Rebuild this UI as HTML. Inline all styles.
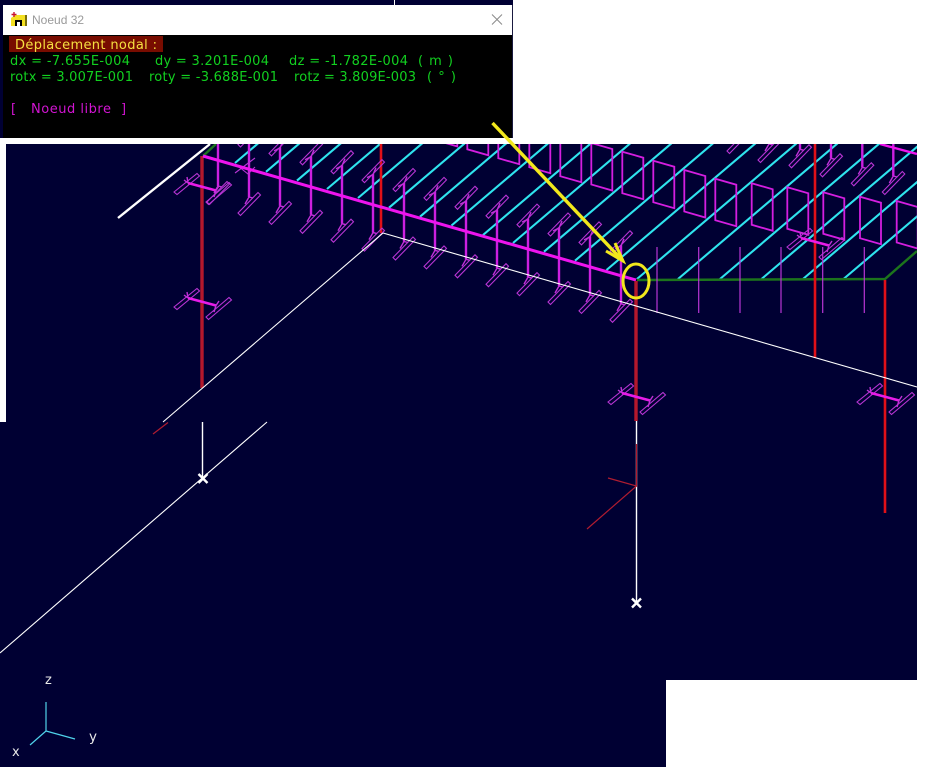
<!DOCTYPE html>
<html>
<head>
<meta charset="utf-8">
<title>Noeud 32</title>
<style>
html,body{margin:0;padding:0;background:#fff;width:926px;height:780px;overflow:hidden}
svg{display:block}
text{font-family:"DejaVu Sans","Liberation Sans",sans-serif}
</style>
</head>
<body>
<svg width="926" height="780" viewBox="0 0 926 780" xmlns="http://www.w3.org/2000/svg">
<defs>
  <clipPath id="top"><rect x="6" y="144" width="911" height="300"/></clipPath>
  <g id="ib">
    <path d="M0,-6V-64.5" stroke="#cc20e0" stroke-width="2.4" fill="none"/>
    <path d="M-11,10L9,-10.5L11.5,-8L-8.5,12.5ZM-11,-58.5L9,-79L11.5,-76.5L-8.5,-56Z" stroke="#b835d4" stroke-width="1.1" fill="none"/>
    <path d="M0,-6L-4,1M0,-6L4,-5M0,-64L-6,-61M0,-64L3,-71" stroke="#c030d8" stroke-width="1.4" fill="none"/>
  </g>
  <g id="is">
    <path d="M-28,5L-5,-13.5L-2.5,-11L-25,7.5ZM4,15L27,-4.5L29.5,-2L6.5,17.5Z" stroke="#b835d4" stroke-width="1.1" fill="none"/>
    <path d="M-14,-4L14,3.5" stroke="#e81ce8" stroke-width="2.6" fill="none"/>
    <path d="M-14,-4L-18,-7M-14,-4L-15,-10M14,3.5L17,-1M14,3.5L12,10" stroke="#c030d8" stroke-width="1.4" fill="none"/>
  </g>
  <path id="bx" d="M0,0L21,6V47.5L0,41.5Z" stroke="#d41ee0" stroke-width="1.8" fill="none"/>
  <path id="cy" d="M0,0L240,-204" stroke="#2fe4ee" stroke-width="2.1" fill="none"/>
</defs>

<!-- page backgrounds -->
<rect width="926" height="780" fill="#fff"/>
<rect x="0" y="0" width="513" height="138" fill="#000033"/>
<rect x="394" y="0" width="1" height="5" fill="#fff"/>
<rect x="6" y="144" width="911" height="536" fill="#000033"/>
<rect x="0" y="422" width="666" height="345" fill="#000033"/>

<g clip-path="url(#top)">
  <!-- cyan bars -->
  <use href="#cy" x="235" y="163"/><use href="#cy" x="266" y="171.8"/><use href="#cy" x="297" y="180.6"/>
  <use href="#cy" x="327" y="189"/><use href="#cy" x="358" y="198"/><use href="#cy" x="389" y="207.7"/>
  <use href="#cy" x="420" y="216.7"/><use href="#cy" x="451.5" y="225.5"/><use href="#cy" x="483" y="235"/>
  <use href="#cy" x="513" y="243"/><use href="#cy" x="544" y="251.7"/><use href="#cy" x="575" y="260.7"/>
  <use href="#cy" x="606.5" y="270"/><use href="#cy" x="637" y="279"/><use href="#cy" x="678" y="279"/>
  <use href="#cy" x="720" y="279"/><use href="#cy" x="761.5" y="279"/><use href="#cy" x="803" y="279"/>
  <use href="#cy" x="843.5" y="279"/>

  <!-- box sections -->
  <use href="#bx" x="436.3" y="98.9"/><use href="#bx" x="467.3" y="107.8"/><use href="#bx" x="498.3" y="116.7"/>
  <use href="#bx" x="529.3" y="125.7"/><use href="#bx" x="560.3" y="134.7"/><use href="#bx" x="591.3" y="143"/>
  <use href="#bx" x="622.3" y="151.7"/><use href="#bx" x="653.3" y="160.7"/><use href="#bx" x="684.3" y="170"/>
  <use href="#bx" x="715.3" y="178.7"/><use href="#bx" x="751.7" y="183.3"/><use href="#bx" x="787.3" y="187.3"/>
  <use href="#bx" x="823.3" y="192.3"/><use href="#bx" x="860" y="196.7"/><use href="#bx" x="896.7" y="201"/>

  <!-- green -->
  <path d="M203,156L216,144M637,280L885,279L917,251" stroke="#1c741c" stroke-width="2.4" fill="none"/>

  <!-- columns -->
  <path d="M202,156V388" stroke="#b4182c" stroke-width="3.4" fill="none"/>
  <path d="M381,144V233" stroke="#e01018" stroke-width="2.6" fill="none"/>
  <path d="M815,144V358" stroke="#e01018" stroke-width="2.6" fill="none"/>

  <!-- thin purlins -->
  <path d="M657,247V313M698.7,247V313M740,247V313M781,247V313M822.7,247V313M864.3,247V313" stroke="#b835d4" stroke-width="1.2" fill="none"/>

  <!-- I sections along beam -->
  <use href="#ib" x="218" y="192"/>
  <use href="#ib" x="249" y="203"/><use href="#ib" x="280" y="211.9"/><use href="#ib" x="311" y="220.8"/>
  <use href="#ib" x="342" y="229.7"/><use href="#ib" x="373" y="238.6"/><use href="#ib" x="404" y="247.5"/>
  <use href="#ib" x="435" y="256.4"/><use href="#ib" x="466" y="265.3"/><use href="#ib" x="497" y="274.2"/>
  <use href="#ib" x="528" y="283.1"/><use href="#ib" x="559" y="292"/><use href="#ib" x="590" y="300.9"/>
  <use href="#ib" x="621" y="309.8"/>
  <use href="#ib" x="738" y="141"/><use href="#ib" x="769" y="150"/><use href="#ib" x="800" y="155.3"/>
  <use href="#ib" x="831" y="164.3"/><use href="#ib" x="862.3" y="173.3"/><use href="#ib" x="893.3" y="182"/>
  <path d="M235,173L255,158M238,166L248,174L255,167" stroke="#b835d4" stroke-width="1.1" fill="none"/>

  <!-- main beam -->
  <path d="M203,156L636,280" stroke="#ee14ee" stroke-width="3" fill="none"/>
  <path d="M880,144L917,154" stroke="#ee14ee" stroke-width="2.4" fill="none"/>

  <!-- sections on columns -->
  <use href="#is" x="202" y="187"/>
  <use href="#is" x="815" y="242"/>
</g>

<!-- column running past the clipped area -->
<path d="M885,280V513" stroke="#e01018" stroke-width="2.6" fill="none"/>
<path d="M636,281V421" stroke="#b4182c" stroke-width="3.4" fill="none"/>

<!-- sections below -->
<use href="#is" x="202" y="302"/>
<use href="#is" x="636" y="397"/>
<use href="#is" x="885" y="397"/>

<!-- white lines -->
<path d="M118,218L210,144" stroke="#fff" stroke-width="2.4" fill="none"/>
<path d="M383,233L917,387M383,233L163,422M267,422L0,653" stroke="#fff" stroke-width="1.1" fill="none"/>
<path d="M202.5,422V478M636.5,421V602" stroke="#fff" stroke-width="1.4" fill="none"/>
<path d="M198.5,474L207.5,483M207.5,474L198.5,483M632,598.5L641,607.5M641,598.5L632,607.5" stroke="#fff" stroke-width="2.4" fill="none"/>

<!-- dark red local frames -->
<path d="M636.5,444V486L608,478M636.5,486L587,529M153,434L168,422.5" stroke="#b01c30" stroke-width="1.2" fill="none"/>

<!-- axes -->
<path d="M46,702V731L75,739M46,731L30,745" stroke="#4fd2ea" stroke-width="1.2" fill="none"/>
<text x="45" y="684" font-size="13" fill="#e8e8e8">z</text>
<text x="89" y="741" font-size="13.5" fill="#e8e8e8">y</text>
<text x="12" y="756" font-size="13" fill="#e8e8e8">x</text>

<!-- window -->
<rect x="3" y="5" width="509" height="133" fill="#000"/>
<rect x="3" y="5" width="509" height="30" fill="#fff"/>
<rect x="512" y="5" width="1" height="133" fill="#1a1a40"/>
<rect x="0" y="138" width="513" height="6" fill="#fff"/>
<rect x="0" y="144" width="6" height="278" fill="#fff"/>

<!-- title icon -->
<path d="M11,18L15,15H27V26H22V20H15V26H11Z" fill="#f4e020"/>
<path d="M15,20H22V26H20V22H17V26H15Z" fill="#000"/>
<path d="M26,15V26" stroke="#000" stroke-width="1"/>
<path d="M14,12V17M11.5,14.5H16.5" stroke="#c81430" stroke-width="1.4"/>
<text x="32" y="24" font-size="12" fill="#9a9a9a" style="font-family:'Liberation Sans',sans-serif">Noeud 32</text>
<path d="M492,14.5L502,24.5M502,14.5L492,24.5" stroke="#8a8a8a" stroke-width="1" fill="none"/>

<!-- window text -->
<rect x="9" y="36" width="154" height="16" fill="#780c00"/>
<text x="15" y="49" font-size="13" fill="#f6e040" textLength="142" lengthAdjust="spacing">Déplacement nodal :</text>
<g font-size="13" fill="#12d020">
  <text x="10" y="65" textLength="120" lengthAdjust="spacing">dx = -7.655E-004</text>
  <text x="155" y="65" textLength="114" lengthAdjust="spacing">dy = 3.201E-004</text>
  <text x="289" y="65" textLength="119" lengthAdjust="spacing">dz = -1.782E-004</text>
  <text x="418" y="65" textLength="35" lengthAdjust="spacing">( m )</text>
  <text x="10" y="81" textLength="123" lengthAdjust="spacing">rotx = 3.007E-001</text>
  <text x="149" y="81" textLength="129" lengthAdjust="spacing">roty = -3.688E-001</text>
  <text x="294" y="81" textLength="122" lengthAdjust="spacing">rotz = 3.809E-003</text>
  <text x="427" y="81" textLength="29" lengthAdjust="spacing">( ° )</text>
</g>
<g font-size="13" fill="#d214d2">
  <text x="11" y="113">[</text>
  <text x="31" y="113" textLength="80" lengthAdjust="spacing">Noeud libre</text>
  <text x="121" y="113">]</text>
</g>

<!-- yellow annotation (over the window) -->
<path d="M492.5,123L622,260" stroke="#f2e81c" stroke-width="3.4" fill="none"/>
<path d="M615,243L623,261L606,251" stroke="#f2e81c" stroke-width="3" fill="none"/>
<ellipse cx="636" cy="281" rx="13" ry="17" stroke="#f2e81c" stroke-width="3" fill="none"/>
</svg>
</body>
</html>
